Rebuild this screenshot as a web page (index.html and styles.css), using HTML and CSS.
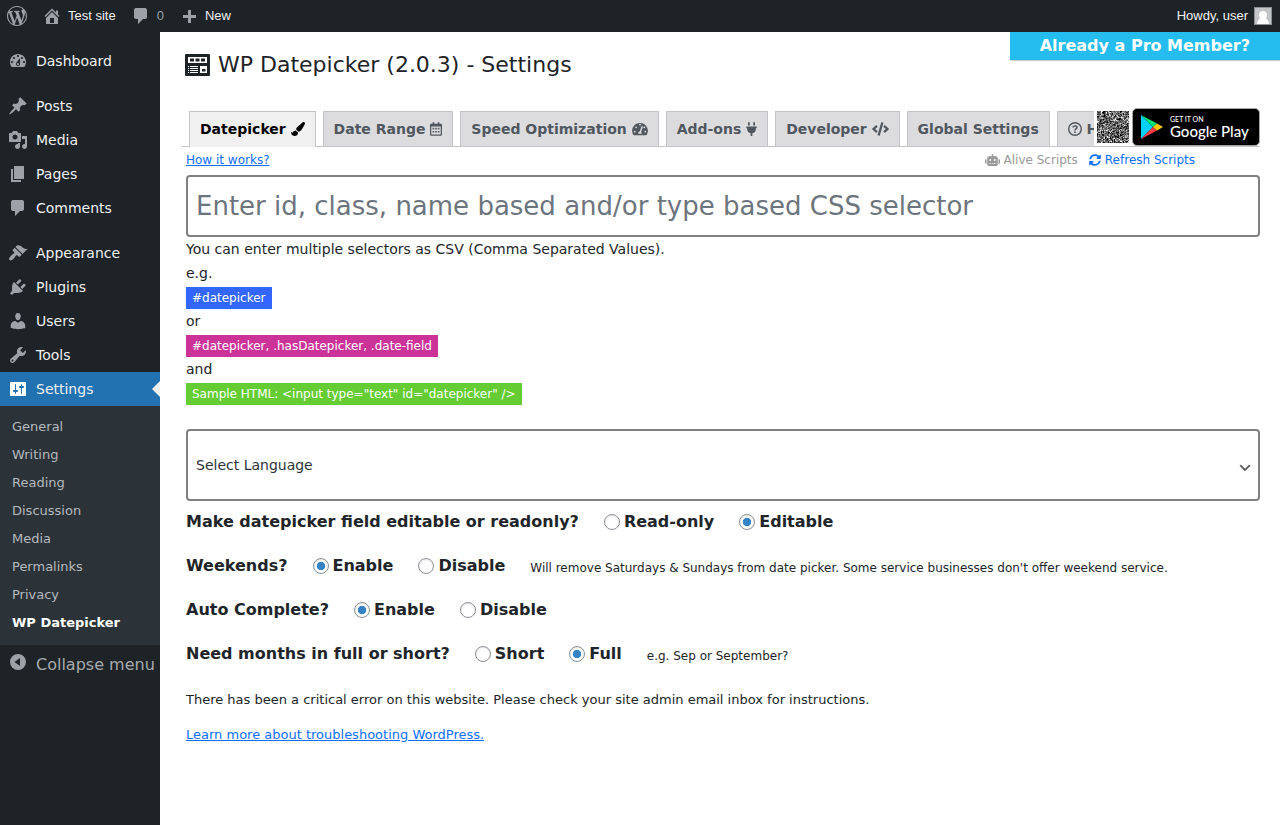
FILE: index.html
```
<!DOCTYPE html>
<html lang="en">
<head>
    <meta charset="UTF-8">
    <meta name="viewport" content="width=device-width, initial-scale=1.0">
    <title>WP Datepicker - Settings</title>
    <link rel="stylesheet" href="styles.css">
</head>
<body>

<header class="adminbar">
  <a href="#" class="bar-item logo" aria-label="About WordPress"><svg class="icon" viewBox="0 0 20 20"><path d="M20 10c0-5.51-4.49-10-10-10C4.48 0 0 4.49 0 10c0 5.52 4.48 10 10 10 5.51 0 10-4.48 10-10zM7.78 15.37L4.37 6.22c.55-.02 1.17-.08 1.17-.08.5-.06.44-1.13-.06-1.11 0 0-1.45.11-2.37.11-.18 0-.37 0-.58-.01C4.12 2.69 6.87 1.11 10 1.11c2.33 0 4.45.87 6.05 2.34-.68-.11-1.65.39-1.65 1.58 0 .74.45 1.36.9 2.1.35.61.55 1.36.55 2.46 0 1.49-1.4 5-1.4 5l-3.03-8.37c.54-.02.82-.17.82-.17.5-.05.44-1.25-.06-1.22 0 0-1.44.12-2.38.12-.87 0-2.33-.12-2.33-.12-.5-.03-.56 1.2-.06 1.22l.92.08 1.26 3.41zM17.41 10c.24-.64.74-1.87.43-4.25.7 1.29 1.05 2.71 1.05 4.25 0 3.29-1.73 6.24-4.4 7.78.97-2.59 1.94-5.2 2.92-7.78zM6.1 18.09C3.12 16.65 1.11 13.53 1.11 10c0-1.3.23-2.48.72-3.59C3.25 10.3 4.67 14.2 6.1 18.09zm4.03-6.63l2.58 6.98c-.86.29-1.76.45-2.71.45-.79 0-1.57-.11-2.29-.33.81-2.38 1.62-4.74 2.42-7.1z"/></svg></a>
  <a href="#" class="bar-item"><svg class="icon" viewBox="0 0 20 20"><path fill-rule="evenodd" d="M16 8.5l1.53 1.53-1.06 1.06L10 4.6l-6.47 6.49-1.06-1.06L10 2.5l4 4v-2h2v4zm-6-2.46l6 5.99V18H4v-5.97zM12 17v-5H8v5h4z"/></svg>Test site</a>
  <a href="#" class="bar-item count"><svg class="icon" viewBox="0 0 20 20"><path d="M5 2h9c1.1 0 2 .9 2 2v7c0 1.1-.9 2-2 2h-2l-5 5v-5H5c-1.1 0-2-.9-2-2V4c0-1.1.9-2 2-2z"/></svg>0</a>
  <a href="#" class="bar-item"><svg class="icon" viewBox="0 0 20 20"><path d="M17 9v3h-5v5H9v-5H4V9h5V4h3v5h5z"/></svg>New</a>
  <a href="#" class="bar-item account">Howdy, user
    <svg class="avatar" viewBox="0 0 18 18"><rect width="18" height="18" fill="#8c8f94"/><rect x="1" y="1" width="16" height="16" fill="#c3c4c7"/><path fill="#fff" d="M9 4c2.500 0 4 1.700 4 4 0 1.400-.6 2.600-1.500 3.300 1.800.8 3.200 2.700 3.500 5.700H3c.3-3 1.700-4.900 3.500-5.700C5.600 10.600 5 9.400 5 8c0-2.300 1.500-4 4-4z"/></svg>
  </a>
</header>

<div class="layout">

  <nav class="sidebar">
    <ul class="menu">
      <li class="gap"><a href="#"><svg class="icon" viewBox="0 0 20 20"><path fill-rule="evenodd" d="M3.76 16h12.48c1.1-1.37 1.76-3.11 1.76-5 0-4.42-3.58-8-8-8s-8 3.58-8 8c0 1.89.66 3.63 1.76 5zM10 4c.55 0 1 .45 1 1s-.45 1-1 1-1-.45-1-1 .45-1 1-1zM6 6c.55 0 1 .45 1 1s-.45 1-1 1-1-.45-1-1 .45-1 1-1zm8 0c.55 0 1 .45 1 1s-.45 1-1 1-1-.45-1-1 .45-1 1-1zm-5.37 5.55L12 7v6c0 1.1-.9 2-2 2s-2-.9-2-2c0-.57.24-1.08.63-1.45zM4 10c.55 0 1 .45 1 1s-.45 1-1 1-1-.45-1-1 .45-1 1-1zm12 0c.55 0 1 .45 1 1s-.45 1-1 1-1-.45-1-1 .45-1 1-1zm-5 3c0-.55-.45-1-1-1s-1 .45-1 1 .45 1 1 1 1-.45 1-1z"/></svg>Dashboard</a></li>
      <li><a href="#"><svg class="icon" viewBox="0 0 20 20"><path d="M10.44 3.02l1.82-1.82 6.36 6.35-1.83 1.82c-1.05-.68-2.48-.57-3.41.36l-.75.75c-.92.93-1.04 2.35-.35 3.41l-1.83 1.82-2.41-2.41-2.8 2.79c-.42.42-3.38 2.71-3.8 2.29s1.86-3.39 2.28-3.81l2.79-2.79L4.1 9.36l1.83-1.82c1.05.69 2.48.57 3.4-.36l.75-.75c.93-.92 1.05-2.35.36-3.41z"/></svg>Posts</a></li>
      <li><a href="#"><svg class="icon" viewBox="0 0 20 20"><path fill-rule="evenodd" d="M13 11V4c0-.55-.45-1-1-1h-1.67L9 1H5L3.670 3H2c-.55 0-1 .45-1 1v7c0 .55.45 1 1 1h10c.55 0 1-.45 1-1zM7 4.500c1.380 0 2.500 1.120 2.500 2.500S8.380 9.500 7 9.500 4.500 8.380 4.500 7 5.620 4.500 7 4.500zM14 6h5v10.500c0 1.380-1.120 2.500-2.500 2.500S14 17.880 14 16.500s1.120-2.500 2.500-2.500c.17 0 .34.02.5.05V9h-3V6zm-4 8.050V13h2v3.500c0 1.380-1.120 2.500-2.500 2.500S7 17.880 7 16.500 8.120 14 9.500 14c.17 0 .34.02.5.05z"/></svg>Media</a></li>
      <li><a href="#"><svg class="icon" viewBox="0 0 20 20"><path d="M6 15V2h10v13H6zm-1 1h8v2H3V5h2v11z"/></svg>Pages</a></li>
      <li class="gap"><a href="#"><svg class="icon" viewBox="0 0 20 20"><path d="M5 2h9c1.100 0 2 .9 2 2v7c0 1.100-.9 2-2 2h-2l-5 5v-5H5c-1.100 0-2-.9-2-2V4c0-1.100.9-2 2-2z"/></svg>Comments</a></li>
      <li><a href="#"><svg class="icon" viewBox="0 0 20 20"><path d="M14.48 11.06L7.41 3.99l1.5-1.5c.5-.56 2.3-.47 3.51.32 1.21.8 1.43 1.28 2.91 2.1 1.18.64 2.45 1.26 4.45.85zm-.71.71L6.7 4.7 4.93 6.47c-.39.39-.39 1.02 0 1.41l1.06 1.06c.39.39.39 1.03 0 1.42-.6.6-1.43 1.11-2.21 1.69-.35.26-.7.53-1.01.84C1.43 14.23.4 16.08 1.4 17.07c.99 1 2.84-.03 4.18-1.36.31-.31.58-.66.85-1.02.57-.78 1.08-1.61 1.69-2.21.39-.39 1.02-.39 1.41 0l1.06 1.06c.39.39 1.02.39 1.41 0z"/></svg>Appearance</a></li>
      <li><a href="#"><svg class="icon" viewBox="0 0 20 20"><path d="M13.11 4.36L9.87 7.6 8 5.73l3.24-3.24c.35-.34 1.05-.2 1.56.32.52.51.66 1.21.31 1.55zm-8 1.77l.91-1.12 9.01 9.01-1.19.84c-.71.71-2.63 1.16-3.82 1.16H6.14L4.9 17.26c-.59.59-1.54.59-2.12 0-.59-.58-.59-1.53 0-2.12l1.24-1.24v-3.88c0-1.13.4-3.19 1.09-3.89zm7.26 3.97l3.24-3.24c.34-.35 1.04-.21 1.55.31.52.51.66 1.21.31 1.55l-3.24 3.25z"/></svg>Plugins</a></li>
      <li><a href="#"><svg class="icon" viewBox="0 0 20 20"><path d="M10 9.25c-2.27 0-2.73-3.44-2.73-3.44C7 4.02 7.82 2 9.97 2c2.16 0 2.98 2.02 2.71 3.81 0 0-.41 3.44-2.68 3.44zm0 2.57L12.72 10c2.39 0 4.52 2.33 4.52 4.53v2.49s-3.65 1.13-7.24 1.13c-3.65 0-7.24-1.13-7.24-1.13v-2.49c0-2.25 1.94-4.48 4.47-4.48z"/></svg>Users</a></li>
      <li><a href="#"><svg class="icon" viewBox="0 0 20 20"><path fill-rule="evenodd" d="M16.68 9.77c-1.34 1.34-3.3 1.67-4.95.99l-5.41 6.52c-.99.99-2.59.99-3.58 0s-.99-2.59 0-3.57l6.52-5.42c-.68-1.65-.35-3.61.99-4.95 1.28-1.28 3.12-1.62 4.72-1.06l-2.89 2.89 2.82 2.82 2.86-2.87c.53 1.58.18 3.39-1.08 4.65zM3.81 16.21c.4.39 1.04.39 1.43 0 .4-.4.4-1.04 0-1.43-.39-.4-1.03-.4-1.43 0-.39.39-.39 1.03 0 1.43z"/></svg>Tools</a></li>
      <li class="current"><a href="#"><svg class="icon" viewBox="0 0 20 20"><path fill-rule="evenodd" d="M18 16V4c0-.55-.45-1-1-1H3c-.55 0-1 .45-1 1v12c0 .55.45 1 1 1h14c.55 0 1-.45 1-1zM8 11h1c.55 0 1 .45 1 1s-.45 1-1 1H8v1.500c0 .28-.22.5-.5.5s-.5-.22-.5-.5V13H6c-.55 0-1-.45-1-1s.45-1 1-1h1V5.500c0-.28.22-.5.5-.5s.5.22.5.5V11zm5-2h-1c-.55 0-1-.45-1-1s.45-1 1-1h1V5.500c0-.28.22-.5.5-.5s.5.22.5.5V7h1c.55 0 1 .45 1 1s-.45 1-1 1h-1v5.500c0 .28-.22.5-.5.5s-.5-.22-.5-.5V9z"/></svg>Settings</a></li>
    </ul>
    <ul class="submenu">
      <li><a href="#">General</a></li>
      <li><a href="#">Writing</a></li>
      <li><a href="#">Reading</a></li>
      <li><a href="#">Discussion</a></li>
      <li><a href="#">Media</a></li>
      <li><a href="#">Permalinks</a></li>
      <li><a href="#">Privacy</a></li>
      <li class="current"><a href="#">WP Datepicker</a></li>
    </ul>
    <button type="button" class="collapse"><svg class="icon" viewBox="0 0 20 20"><path fill-rule="evenodd" d="M10 2a8 8 0 1 1 0 16 8 8 0 0 1 0-16zM12 6l-5.500 4L12 14z"/></svg>Collapse menu</button>
  </nav>

  <main class="content">
    <div class="top">
      <h1><svg class="title-icon" viewBox="0 0 25 22"><rect width="25" height="22" rx="1" fill="#1d2327"/><path fill="#fff" fill-rule="evenodd" d="M3 3h19v6H3zM5 4.500v3h4v-3zm5.500 0v3h4v-3zm5.500 0v3h4v-3zM15 12h7v7h-7zm2 3v2.500h3.500V15z"/><path fill="#fff" d="M3 12h1v1H3zM3 14h1v1H3zM3 16h1v1H3zM3 18h1v1H3zM5 12h8v1H5zM5 14h8v1H5zM5 16h8v1H5zM5 18h8v1H5z"/></svg>WP Datepicker (2.0.3) - Settings</h1>
      <a href="#" class="ribbon">Already a Pro Member?</a>
    </div>

    <div class="wrap">
      <div class="tab-bar">
        <nav class="tabs">
          <a href="#" class="tab active">Datepicker <svg viewBox="0 0 512 512"><path d="M167.02 309.34c-40.12 2.58-76.53 17.86-97.19 72.3-2.35 6.21-8 9.98-14.59 9.98-11.11 0-45.46-27.67-55.25-34.35C0 439.62 37.93 512 128 512c75.86 0 128-43.77 128-120.19 0-3.11-.65-6.08-.97-9.13l-88.01-73.34zM457.89 0c-15.16 0-29.37 6.71-40.21 16.45C213.27 199.05 192 203.34 192 257.09c0 13.7 3.25 26.76 8.73 38.7l63.82 53.18c7.21 1.8 14.64 3.03 22.39 3.03 62.11 0 98.11-45.47 211.16-256.46 7.38-14.35 13.9-29.85 13.9-45.99C512 20.64 486 0 457.89 0z"/></svg></a>
          <a href="#" class="tab">Date Range <svg class="w12" viewBox="0 0 448 512"><path fill-rule="evenodd" d="M400 64h-48V12c0-7-5-12-12-12h-40c-7 0-12 5-12 12v52H160V12c0-7-5-12-12-12h-40c-7 0-12 5-12 12v52H48C21 64 0 85 0 112v352c0 27 21 48 48 48h352c27 0 48-21 48-48V112c0-27-21-48-48-48zm0 400H48V160h352z"/><path d="M96 210h60v60H96zm98 0h60v60h-60zm98 0h60v60h-60zM96 330h60v60H96zm98 0h60v60h-60zm98 0h60v60h-60z"/></svg></a>
          <a href="#" class="tab">Speed Optimization <svg class="w16" viewBox="0 0 576 512"><path fill-rule="evenodd" d="M288 32C129 32 0 161 0 320c0 53 14 102 39 145 6 9 16 15 27 15h444c11 0 21-6 27-15 25-43 39-92 39-145 0-159-129-288-288-288zm0 32a32 32 0 1 1 0 64 32 32 0 0 1 0-64zM96 384a32 32 0 1 1 0-64 32 32 0 0 1 0 64zm48-160a32 32 0 1 1 0-64 32 32 0 0 1 0 64zm247-42l-61 184c21 16 28 43 17 66H229c-18-40 6-84 50-88l64-178c10-29 54-14 48 16zm18 31c4-30 19-53 39-53a32 32 0 0 1 0 64c-16 0-31-4-39-11zm71 171a32 32 0 1 1 0-64 32 32 0 0 1 0 64z"/></svg></a>
          <a href="#" class="tab">Add-ons <svg class="w11" viewBox="0 0 384 512"><path d="M320,32a32,32,0,0,0-64,0v96h64Zm48,128H16A16,16,0,0,0,0,176v32a16,16,0,0,0,16,16H32v32A160.07,160.07,0,0,0,160,412.8V512h64V412.8A160.07,160.07,0,0,0,352,256V224h16a16,16,0,0,0,16-16V176A16,16,0,0,0,368,160ZM128,32a32,32,0,0,0-64,0v96h64Z"/></svg></a>
          <a href="#" class="tab">Developer <svg class="w17" viewBox="0 0 640 512"><path d="M278.9 511.5l-61-17.7c-6.4-1.8-10-8.5-8.2-14.9L346.2 8.7c1.8-6.4 8.5-10 14.9-8.2l61 17.7c6.4 1.8 10 8.5 8.2 14.9L293.8 503.3c-1.9 6.4-8.5 10.1-14.9 8.2zm-114-112.2l43.5-46.4c4.6-4.9 4.3-12.7-.8-17.2L117 256l90.6-79.7c5.1-4.5 5.5-12.3.8-17.2l-43.5-46.4c-4.5-4.8-12.1-5.1-17-.5L3.8 247.2c-5.1 4.7-5.1 12.8 0 17.5l144.1 135.1c4.9 4.6 12.5 4.4 17-.5zm327.2.6l144.1-135.1c5.1-4.7 5.1-12.8 0-17.5L492.1 112.1c-4.8-4.5-12.4-4.3-17 .5L431.6 159c-4.6 4.9-4.3 12.7.8 17.2L523 256l-90.6 79.7c-5.1 4.5-5.5 12.3-.8 17.2l43.5 46.4c4.5 4.9 12.1 5.1 17 .6z"/></svg></a>
          <a href="#" class="tab">Global Settings</a>
          <a href="#" class="tab"><svg viewBox="0 0 14 14"><circle cx="7" cy="7" r="6.300" fill="none" stroke="currentColor" stroke-width="1.400"/><path fill="none" stroke="currentColor" stroke-width="1.500" d="M5 5.500C5.200 3.300 9 3.400 9 5.500 9 6.900 7 6.900 7 8.400"/><circle cx="7" cy="10.200" r=".9"/></svg> Help</a>
        </nav>
        <div class="store">
          <svg class="qr" viewBox="0 0 57 57"><path id="qr"/></svg>
          <a href="#" class="play">
            <svg class="play-icon" viewBox="0 0 22 24"><path fill="#00d0ff" d="M0 0l12 12L0 24z"/><path fill="#00e676" d="M0 0l16 8.500-4 3.500z"/><path fill="#ff3a44" d="M0 24l16-8.500-4-3.500z"/><path fill="#ffc800" d="M16 8.500l6 3.500-6 3.500-4-3.500z"/></svg>
            <span class="play-text"><small>GET IT ON</small>Google Play</span>
          </a>
        </div>
      </div>

      <form class="settings">
        <div class="links">
          <a href="#" class="how">How it works?</a>
          <a href="#" class="alive"><svg class="robot" viewBox="0 0 640 512"><path fill-rule="evenodd" d="M32,224H64V416H32A31.96166,31.96166,0,0,1,0,384V256A31.96166,31.96166,0,0,1,32,224Zm512-48V448a64.06328,64.06328,0,0,1-64,64H160a64.06328,64.06328,0,0,1-64-64V176a79.974,79.974,0,0,1,80-80H288V32a32,32,0,0,1,64,0V96H464A79.974,79.974,0,0,1,544,176ZM264,256a40,40,0,1,0-40,40A39.997,39.997,0,0,0,264,256Zm-8,128H192v32h64Zm96,0H288v32h64ZM456,256a40,40,0,1,0-40,40A39.997,39.997,0,0,0,456,256Zm-8,128H384v32h64ZM640,256V384a31.96166,31.96166,0,0,1-32,32H576V224h32A31.96166,31.96166,0,0,1,640,256Z"/></svg>Alive Scripts</a>
          <a href="#" class="refresh"><svg class="sync" viewBox="0 0 512 512"><path d="M370.72 133.28C339.458 104.008 298.888 87.962 255.848 88c-77.458.068-144.328 53.178-162.791 126.85-1.344 5.363-6.122 9.15-11.651 9.15H24.103c-7.498 0-13.194-6.807-11.807-14.176C33.933 94.924 134.813 8 256 8c66.448 0 126.791 26.136 171.315 68.685L463.03 40.97C478.149 25.851 504 36.559 504 57.941V192c0 13.255-10.745 24-24 24H345.941c-21.382 0-32.09-25.851-16.971-40.971l41.75-41.749zM32 296h134.059c21.382 0 32.09 25.851 16.971 40.971l-41.75 41.75c31.262 29.273 71.835 45.319 114.876 45.28 77.418-.07 144.315-53.144 162.787-126.849 1.344-5.363 6.122-9.15 11.651-9.15h57.304c7.498 0 13.194 6.807 11.807 14.176C478.067 417.076 377.187 504 256 504c-66.448 0-126.791-26.136-171.315-68.685L48.97 471.03C33.851 486.149 8 475.441 8 454.059V320c0-13.255 10.745-24 24-24z"/></svg>Refresh Scripts</a>
        </div>

        <input type="text" class="selector" aria-label="CSS selector" placeholder="Enter id, class, name based and/or type based CSS selector">

        <div class="help">
          <p>You can enter multiple selectors as CSV (Comma Separated Values).</p>
          <p>e.g.</p>
          <code class="blue">#datepicker</code>
          <p>or</p>
          <code class="pink">#datepicker, .hasDatepicker, .date-field</code>
          <p>and</p>
          <code class="green">Sample HTML: &lt;input type="text" id="datepicker" /&gt;</code>
        </div>

        <select class="language" aria-label="Select Language">
          <option>Select Language</option>
        </select>

        <div class="row" role="radiogroup" aria-labelledby="q1">
          <span id="q1">Make datepicker field editable or readonly?</span>
          <label><input type="radio" name="readonly">Read-only</label>
          <label><input type="radio" name="readonly" checked>Editable</label>
        </div>
        <div class="row" role="radiogroup" aria-labelledby="q2">
          <span id="q2">Weekends?</span>
          <label><input type="radio" name="weekends" checked>Enable</label>
          <label><input type="radio" name="weekends">Disable</label>
          <small>Will remove Saturdays &amp; Sundays from date picker. Some service businesses don't offer weekend service.</small>
        </div>
        <div class="row" role="radiogroup" aria-labelledby="q3">
          <span id="q3">Auto Complete?</span>
          <label><input type="radio" name="autocomplete" checked>Enable</label>
          <label><input type="radio" name="autocomplete">Disable</label>
        </div>
        <div class="row" role="radiogroup" aria-labelledby="q4">
          <span id="q4">Need months in full or short?</span>
          <label><input type="radio" name="months">Short</label>
          <label><input type="radio" name="months" checked>Full</label>
          <small>e.g. Sep or September?</small>
        </div>

        <div class="error">
          <p>There has been a critical error on this website. Please check your site admin email inbox for instructions.</p>
          <p><a href="#">Learn more about troubleshooting WordPress.</a></p>
        </div>
      </form>
    </div>
  </main>

</div>

<script src="script.js"></script>
</body>
</html>
```

FILE: styles.css
```
* {
  box-sizing: border-box;
}

body, h1, p, ul {
  margin: 0;
  padding: 0;
}

ul {
  list-style-type: none;
}

body {
  background: #fff;
  color: #212529;
  font: 14px/24px "DejaVu Sans", sans-serif;
}

svg {
  fill: currentColor;
  flex: none;
}

.icon {
  width: 20px;
  height: 20px;
  color: #9ca2a7;
}

/* admin bar */
.adminbar {
  display: flex;
  height: 32px;
  padding: 0 8px 0 7px;
  background: #1d2327;
  font: 13px/32px "Liberation Sans", sans-serif;
}

.bar-item {
  display: flex;
  align-items: center;
  gap: 6px;
  margin-right: 15px;
  color: #f0f0f1;
  text-decoration: none;
}

.adminbar .count {
  color: #9ca2a7;
}

.adminbar .account {
  margin: 0 0 0 auto;
}

.avatar {
  width: 18px;
  height: 18px;
}

/* sidebar */
.layout {
  display: flex;
  min-height: calc(100vh - 32px);
}

.sidebar {
  flex: none;
  width: 160px;
  padding-top: 12px;
  background: #1d2327;
}

.menu a {
  display: flex;
  align-items: center;
  gap: 8px;
  height: 34px;
  padding-left: 8px;
  color: #f0f0f1;
  text-decoration: none;
}

.menu .gap {
  margin-bottom: 11px;
}

.menu .current {
  position: relative;
  background: #2271b1;
}

.menu .current .icon {
  color: #fff;
}

.menu .current::after {
  content: "";
  position: absolute;
  right: 0;
  top: 9px;
  border: 8px solid transparent;
  border-left-width: 0;
  border-right-color: #f0f0f1;
}

.submenu {
  padding: 7px 0 8px;
  background: #2c3338;
  font-size: 13px;
}

.submenu a {
  display: block;
  padding-left: 12px;
  color: #b4b9be;
  line-height: 28px;
  text-decoration: none;
}

.submenu .current a {
  color: #fff;
  font-weight: 700;
}

.collapse {
  display: flex;
  gap: 8px;
  padding: 7px 0 0 8px;
  border: 0;
  background: none;
  color: #a7aaad;
  font: 16px/26px "DejaVu Sans", sans-serif;
  white-space: nowrap;
}

/* page */
.content {
  flex: 1;
  min-width: 0;
}

.top {
  display: flex;
  justify-content: space-between;
  align-items: flex-start;
  padding-left: 25px;
}

h1 {
  display: flex;
  align-items: center;
  gap: 8px;
  padding-top: 16px;
  color: #1d2327;
  font-size: 22px;
  font-weight: 400;
  line-height: 33px;
}

.title-icon {
  width: 25px;
  height: 22px;
}

.ribbon {
  padding: 0 30px;
  background: #25bcf0;
  box-shadow: 1px 1px 1px #ccc;
  color: #fff;
  font-size: 16px;
  font-weight: 700;
  line-height: 28px;
  text-decoration: none;
}

.wrap {
  padding: 0 20px 0 22px;
}

.tab-bar {
  position: relative;
  margin-top: 30px;
}

.tabs {
  display: flex;
  gap: 7px;
  height: 36px;
  padding-left: 7px;
  box-shadow: inset 0 -1px #c3c4c7;
  overflow: hidden;
}

.tab {
  flex: none;
  height: 35px;
  padding: 5px 10px;
  border: 1px solid #c3c4c7;
  border-bottom: 0;
  background: #dcdcde;
  color: #50575e;
  font-weight: 700;
  text-decoration: none;
}

.tab svg {
  width: 14px;
  height: 14px;
  vertical-align: -2px;
}

.tab .w11 {
  width: 11px;
}

.tab .w12 {
  width: 12px;
}

.tab .w16 {
  width: 16px;
}

.tab .w17 {
  width: 17px;
}

/* one pixel taller, hides the line below it */
.tab.active {
  height: 36px;
  background: #f0f0f1;
  color: #000;
}

/* lies over the end of the tab row */
.store {
  position: absolute;
  right: 0;
  bottom: 1px;
  display: flex;
  align-items: center;
  gap: 3px;
  padding-left: 3px;
  background: #fff;
}

.qr {
  width: 32px;
  height: 32px;
  color: #000;
}

.play {
  display: flex;
  align-items: center;
  gap: 7px;
  width: 128px;
  height: 38px;
  padding-left: 8px;
  border: 1px solid #a6a6a6;
  border-radius: 5px;
  background: #000;
  color: #fff;
  text-decoration: none;
}

.play-icon {
  width: 22px;
  height: 24px;
}

.play-text {
  font: 500 15px/16px Lato, sans-serif;
  white-space: nowrap;
}

.play-text small {
  display: block;
  font-size: 7px;
  line-height: 8px;
}

.settings {
  padding-left: 4px;
}

.links {
  display: flex;
  align-items: center;
  gap: 11px;
  height: 28px;
  padding: 0 65px 2px 0;
  font-size: 12px;
}

.links a {
  display: flex;
  align-items: center;
  gap: 4px;
  text-decoration: none;
}

.links .how {
  margin-right: auto;
  color: #0d6efd;
  text-decoration: underline;
}

.alive {
  color: #999;
}

.refresh {
  color: #0d6efd;
}

.robot {
  width: 15px;
  height: 12px;
}

.sync {
  width: 12px;
  height: 12px;
}

.selector {
  display: block;
  width: 100%;
  height: 62px;
  padding: 0 8px;
  border: 2px solid #808080;
  border-radius: 4px;
  font: 26px "DejaVu Sans", sans-serif;
}

.selector::placeholder {
  color: #6c757d;
}

.help code {
  display: block;
  width: fit-content;
  margin-top: 2px;
  padding: 0 6px;
  color: #fff;
  font: 12px/22px "DejaVu Sans", sans-serif;
}

.help .blue {
  background: #36f;
}

.help .pink {
  background: #c39;
}

.help .green {
  background: #6c3;
}

.language {
  display: block;
  width: 100%;
  height: 72px;
  margin-top: 24px;
  padding: 0 24px 0 8px;
  border: 2px solid #808080;
  border-radius: 4px;
  appearance: none;
  background: #fff url("data:image/svg+xml,%3Csvg width='20' height='20' xmlns='http://www.w3.org/2000/svg'%3E%3Cpath d='M5 6l5 5 5-5 2 1-7 7-7-7 2-1z' fill='%23555'/%3E%3C/svg%3E") no-repeat right 5px top 55%;
  background-size: 16px 16px;
  color: #2c3338;
  font: 14px "DejaVu Sans", sans-serif;
}

.row {
  display: flex;
  align-items: center;
  gap: 25px;
  height: 44px;
  padding-bottom: 2px;
  font-size: 16px;
  font-weight: 700;
}

.row label {
  display: flex;
  align-items: center;
  gap: 4px;
}

.row small {
  padding-top: 4px;
  font-size: 12px;
  font-weight: 400;
}

.row input {
  width: 16px;
  height: 16px;
  margin: 0;
  border: 1px solid #8c8f94;
  border-radius: 50%;
  appearance: none;
  background: #fff;
  box-shadow: inset 0 1px 2px rgba(0, 0, 0, 0.1);
}

.row input:checked {
  background: radial-gradient(circle, #3582c4 50%, #fff 55%);
  background-size: 100% 100%;
  background: radial-gradient(closest-side, #3582c4 55%, #fff 65%);
}

.error {
  display: grid;
  gap: 11px;
  padding-top: 11px;
  font-size: 13px;
}

.error a {
  color: #0d6efd;
}
```

FILE: script.js
```
// fills the QR code: pseudo random modules plus the corner marks
let size = 57;
let seed = 7;
let d = "";

function corner(x, y) {
  return Math.max(Math.abs(x - 3), Math.abs(y - 3));
}

for (let y = 0; y < size; y++) {
  for (let x = 0; x < size; x++) {
    seed = (seed * 1103515 + 12345) % 2147483647;
    let on = seed / 2147483647 > 0.42;
    let r = Math.min(corner(x, y), corner(size - 1 - x, y), corner(x, size - 1 - y));
    if (r <= 4) {
      on = r !== 2 && r !== 4;
    }
    if (on) {
      d += "M" + x + " " + y + "h1v1h-1z";
    }
  }
}

document.querySelector("#qr").setAttribute("d", d);
```
